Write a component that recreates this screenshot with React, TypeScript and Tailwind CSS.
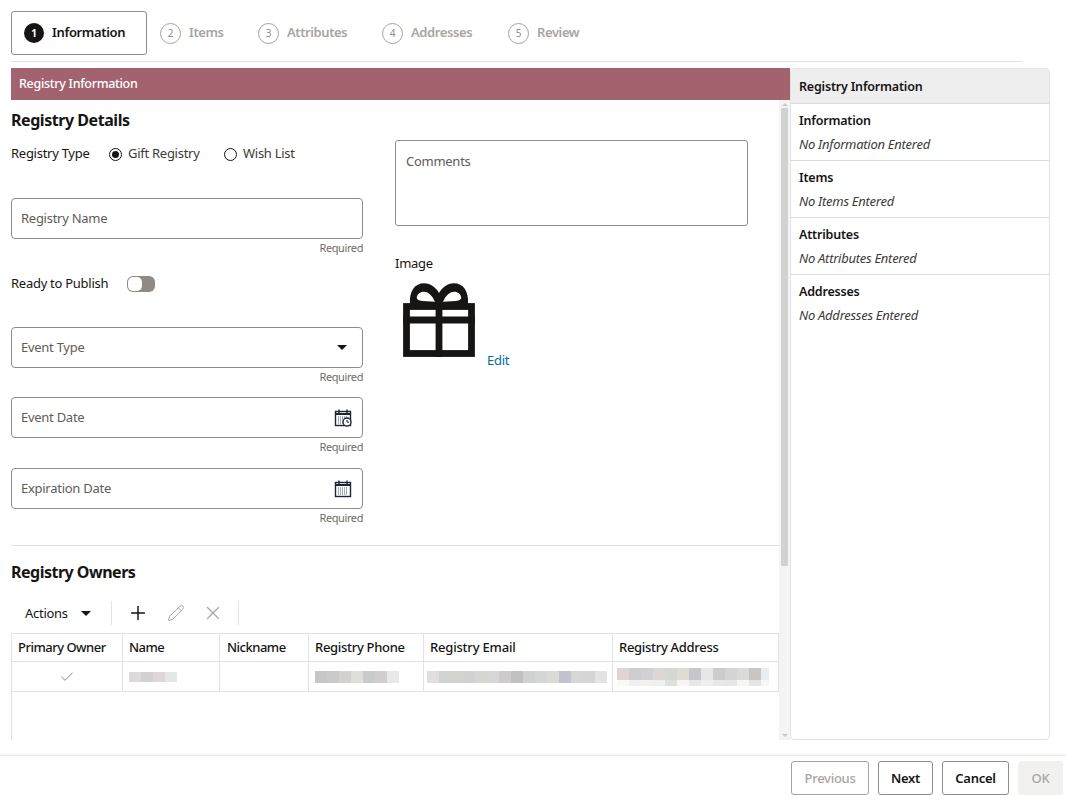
import { Check, Pencil, Plus, X } from "lucide-react";

const FONT = "font-['Noto_Sans','Open_Sans',sans-serif]";

const steps = [
  { n: 2, label: "Items", cls: "ml-[13px] mr-[36px]", w: "w-[33px]" },
  { n: 3, label: "Attributes", cls: "mr-[36px]", w: "w-[59px]" },
  { n: 4, label: "Addresses", cls: "mr-[35px]", w: "w-[62px]" },
  { n: 5, label: "Review", cls: "", w: "w-[44px]" },
];

const summary = [
  { title: "Information", text: "No Information Entered" },
  { title: "Items", text: "No Items Entered" },
  { title: "Attributes", text: "No Attributes Entered" },
  { title: "Addresses", text: "No Addresses Entered" },
];

const Caret = () => (
  <svg width="10" height="5" viewBox="0 0 10 5" className="block">
    <path d="M0 0h10L5 5z" fill="#161513" />
  </svg>
);

const CalendarIcon = ({ clock }: { clock?: boolean }) => (
  <svg width="18" height="18" viewBox="0 0 18 18" fill="none">
    <rect x="1.5" y="2.5" width="15" height="14" fill="#fff" stroke="#1d2433" strokeWidth="1.4" />
    <path d="M1.5 5h15" stroke="#1d2433" strokeWidth="2" />
    <path d="M5 0.5v3.5M13 0.5v3.5" stroke="#1d2433" strokeWidth="1.4" />
    <path d="M4 8h10M4 10h10M4 12h10M4 14h10" stroke="#4a5a78" strokeWidth="1" strokeDasharray="1 1" />
    {clock && (
      <>
        <circle cx="13" cy="13" r="4" fill="#fff" stroke="#1d2433" strokeWidth="1.3" />
        <path d="M13 11v2.2h2" stroke="#1d2433" strokeWidth="1" />
      </>
    )}
  </svg>
);

const GiftIcon = () => (
  <svg width="74" height="75" viewBox="0 0 74 75" fill="none" className="block shrink-0">
    <path
      fillRule="evenodd"
      fill="#161513"
      d="M8 21C7 8 13 .3 22 .3 29 .3 34 5 37 10 40 5 45 .3 52 .3 61 .3 67 8 66 21ZM14.7 15C15 11 18 8.7 22 8.7 26 8.7 30 12 33 18.7L20 18C17 17.5 15 16.5 14.7 15ZM59.3 15C59 11 56 8.7 52 8.7 48 8.7 44 12 41 18.7L54 18C57 17.5 59 16.5 59.3 15Z"
    />
    <rect x="4.5" y="23.5" width="65" height="47" stroke="#161513" strokeWidth="6.8" />
    <path d="M1 37h72M37 20v54" stroke="#161513" strokeWidth="6.8" />
  </svg>
);

// floating style text field, label sits inside the box
const Field = ({ label, children, top }: { label: string; children?: React.ReactNode; top?: string }) => (
  <div className={top}>
    <div className="flex h-[41px] items-center justify-between rounded-[4px] border border-[#8f8c88] pl-[9px] pr-[10px]">
      <span className="text-[13px] text-[#5f5b57]">{label}</span>
      {children}
    </div>
    <div className="mt-[1px] text-right text-[11px] leading-[15px] tracking-[-0.4px] text-[#6f6b67]">Required</div>
  </div>
);

const Mosaic = ({ colors, size = 12 }: { colors: string[]; size?: number }) => (
  <div className="flex">
    {colors.map((c, i) => (
      <div key={i} className="w-[12px] shrink-0" style={{ backgroundColor: c, height: size }} />
    ))}
  </div>
);

const App = () => {
  return (
    <div className={`${FONT} flex h-[795px] w-[1066px] flex-col overflow-hidden bg-white text-[13px] tracking-[-0.27px] text-[#161513]`}>
      {/* train */}
      <div className="ml-[11px] mr-[44px] box-content flex h-[50px] shrink-0 items-start border-b border-[#e4e3e1] pt-[11px]">
        <div className="flex h-[44px] w-[136px] items-center rounded-[3px] border border-[#8f8c88] pl-[12px]">
          <span className="flex h-[20px] w-[20px] items-center justify-center rounded-full bg-[#161513] text-[10px] font-bold text-white">1</span>
          <span className="ml-[8px] text-[13px] font-semibold tracking-[-0.35px]">Information</span>
        </div>
        {steps.map((s) => (
          <div key={s.n} className={`flex h-[44px] items-center ${s.cls}`}>
            <span className="flex h-[21px] w-[21px] items-center justify-center rounded-full border border-[#a5a29e] text-[10px] text-[#8f8c88]">{s.n}</span>
            <span className={`ml-[8px] whitespace-nowrap text-[13px] font-semibold tracking-[-0.4px] text-[#a8a5a1] ${s.w}`}>{s.label}</span>
          </div>
        ))}
      </div>

      {/* main */}
      <div className="ml-[11px] mt-[6px] flex h-[672px] w-[1039px] shrink-0">
        <div className="flex w-[779px] flex-col">
          <div className="flex h-[32px] shrink-0 items-center bg-[#a2636f] pl-[8px] text-[12.5px] font-medium tracking-[-0.3px] text-white">Registry Information</div>
          <div className="flex min-h-0 flex-1">
            <div className="w-[768px] overflow-hidden">
              <h2 className="mt-[8px] text-[16px] font-bold leading-[24px] tracking-[-0.45px]">Registry Details</h2>
              <div className="mt-[8px] flex">
                <div className="w-[352px] pt-[2px]">
                  <div className="flex h-[24px] items-center whitespace-nowrap">
                    <span className="w-[98px]">Registry Type</span>
                    <span className="flex h-[13px] w-[13px] items-center justify-center rounded-full border border-[#161513]">
                      <span className="h-[7px] w-[7px] rounded-full bg-[#161513]" />
                    </span>
                    <span className="ml-[6px] w-[71px] text-[#3c3a38]">Gift Registry</span>
                    <span className="ml-[25px] h-[13px] w-[13px] rounded-full border border-[#161513]" />
                    <span className="ml-[6px] text-[#3c3a38]">Wish List</span>
                  </div>
                  <Field label="Registry Name" top="mt-[32px]" />
                  <div className="mt-[17px] flex h-[24px] items-center">
                    <span className="w-[116px]">Ready to Publish</span>
                    <span className="flex h-[16px] w-[28px] items-center rounded-[6px] bg-[#8f8a84] pl-[1px]">
                      <span className="h-[14px] w-[14px] rounded-[5px] bg-white" />
                    </span>
                  </div>
                  <Field label="Event Type" top="mt-[31px]">
                    <span className="mr-[5px]"><Caret /></span>
                  </Field>
                  <Field label="Event Date" top="mt-[13px]">
                    <CalendarIcon clock />
                  </Field>
                  <Field label="Expiration Date" top="mt-[14px]">
                    <CalendarIcon />
                  </Field>
                </div>
                <div className="ml-[32px] w-[353px]">
                  <div className="h-[86px] rounded-[3px] border border-[#8f8c88] pl-[10px] pt-[11px] text-[#5f5b57]">Comments</div>
                  <div className="mt-[28px] leading-[18px]">Image</div>
                  <div className="mt-[11px] flex items-end pl-[7px]">
                    <GiftIcon />
                    <span className="-mb-[12px] ml-[11px] text-[#006b9f]">Edit</span>
                  </div>
                </div>
              </div>

              <div className="mt-[20px] border-t border-[#e4e3e1]" />
              <h2 className="mt-[14px] text-[16px] font-bold leading-[24px] tracking-[-0.5px]">Registry Owners</h2>

              <div className="ml-[14px] mt-[12px] flex h-[34px] items-center">
                <span className="w-[44px] pt-[1px]">Actions</span>
                <span className="ml-[12px] mr-[20px]"><Caret /></span>
                <span className="h-[24px] w-px bg-[#e4e3e1]" />
                <Plus size={22} strokeWidth={1.6} className="ml-[15px] text-[#161513]" />
                <Pencil size={18} strokeWidth={1.3} className="ml-[18px] text-[#a8a5a1]" />
                <X size={22} strokeWidth={1.3} className="ml-[17px] text-[#a8a5a1]" />
                <span className="ml-[14px] h-[24px] w-px bg-[#e4e3e1]" />
              </div>

              <div className="mt-[3px] h-[107px] border-l border-[#e4e3e1]">
                <div className="grid h-[29px] grid-cols-[111px_97px_89px_115px_189px_166px] border-y border-[#e4e3e1] font-medium tracking-[-0.5px]">
                  <div className="flex items-center border-r border-[#e4e3e1] pl-[6px]">Primary Owner</div>
                  <div className="flex items-center border-r border-[#e4e3e1] pl-[6px]">Name</div>
                  <div className="flex items-center border-r border-[#e4e3e1] pl-[7px]">Nickname</div>
                  <div className="flex items-center border-r border-[#e4e3e1] pl-[6px] tracking-[-0.3px]">Registry Phone</div>
                  <div className="flex items-center border-r border-[#e4e3e1] pl-[6px] tracking-[-0.2px]">Registry Email</div>
                  <div className="flex items-center border-r border-[#e4e3e1] pl-[6px] tracking-[-0.3px]">Registry Address</div>
                </div>
                <div className="grid h-[30px] grid-cols-[111px_97px_89px_115px_189px_166px] border-b border-[#e4e3e1]">
                  <div className="flex items-center justify-center border-r border-[#e4e3e1]">
                    <Check size={16} strokeWidth={1.2} className="text-[#6f6b67]" />
                  </div>
                  <div className="flex items-center border-r border-[#e4e3e1] pl-[6px]">
                    <Mosaic colors={["#dcdada", "#d2d0d0", "#dcd6d8", "#e4e6e7"]} size={10} />
                  </div>
                  <div className="border-r border-[#e4e3e1]" />
                  <div className="flex items-center border-r border-[#e4e3e1] pl-[6px]">
                    <Mosaic colors={["#c8c6c5", "#cbcaca", "#d3d2d1", "#dfdedb", "#c9cacb", "#d1cfce", "#e8e8e8"]} />
                  </div>
                  <div className="flex items-center border-r border-[#e4e3e1] pl-[3px]">
                    <Mosaic colors={["#e0dfde", "#d1d3d3", "#d2d3ce", "#d3d0d4", "#d5d7d1", "#d9d6d8", "#cdcbcc", "#c2bfc1", "#d0d2d0", "#d4d6d5", "#dcdad4", "#c2c3cc", "#d7d7d8", "#d6d4d6", "#e2e4e1"]} />
                  </div>
                  <div className="flex flex-col justify-center border-r border-[#e4e3e1] pl-[4px]">
                    <div className="w-[152px] overflow-hidden">
                      <Mosaic colors={["#ded5d4", "#cecdd0", "#d1d0d3", "#dcd6d6", "#d5d7d2", "#dedcd3", "#c6c6cb", "#e7e7e9", "#cccccc", "#d4d4d5", "#d9dcda", "#c9c5c3", "#e9edf0"]} />
                      <Mosaic size={6} colors={["#f8f8f7", "#f0f0f0", "#f2f1f0", "#eff0f0", "#dfdfdd", "#f6f6f6", "#e7e7e7", "#efefef", "#e8e8e8", "#e6e6e6", "#f6f6f4", "#e4e4e3", "#f7f7f7"]} />
                    </div>
                  </div>
                </div>
              </div>
            </div>

            {/* scrollbar */}
            <div className="flex w-[11px] flex-col items-center bg-[#f4f4f4]">
              <span className="mt-[3px] h-0 w-0 border-x-[3px] border-b-[3px] border-x-transparent border-b-[#c8c8c8]" />
              <span className="mt-[2px] h-[458px] w-[7px] bg-[#d2d2d0]" />
              <span className="mb-[3px] mt-auto h-0 w-0 border-x-[3px] border-t-[3px] border-x-transparent border-t-[#c8c8c8]" />
            </div>
          </div>
        </div>

        {/* summary panel */}
        <div className="w-[260px] overflow-hidden rounded-[4px] border border-[#e4e3e1]">
          <div className="flex h-[35px] items-center border-b border-[#d9dde0] bg-[#eeeeee] pl-[8px] pt-[2px] text-[12.5px] font-semibold tracking-[-0.2px]">Registry Information</div>
          {summary.map((s) => (
            <div key={s.title} className="h-[57px] border-b border-[#d9dde0] pl-[8px] pt-[8px] last:border-b-0">
              <div className="text-[12.5px] font-semibold leading-[18px] tracking-[-0.2px]">{s.title}</div>
              <div className="mt-[5px] italic leading-[18px] text-[#3c3a38]">{s.text}</div>
            </div>
          ))}
        </div>
      </div>

      {/* footer */}
      <div className="mt-[15px] flex h-[40px] shrink-0 items-start justify-end border-t border-[#e9e9e8] pr-[3px] pt-[5px] shadow-[0_-1px_3px_rgba(0,0,0,0.06)]">
        <button className="h-[34px] w-[78px] rounded-[3px] border border-[#a5a29e] pt-[1px] font-medium text-[#a8a5a1]">Previous</button>
        <button className="ml-[9px] h-[34px] w-[55px] rounded-[3px] border border-[#8f8c88] pt-[1px] font-semibold">Next</button>
        <button className="ml-[9px] h-[34px] w-[67px] rounded-[3px] border border-[#8f8c88] pt-[1px] font-semibold">Cancel</button>
        <button className="ml-[9px] h-[34px] w-[45px] rounded-[3px] bg-[#f1f1f0] pt-[1px] font-medium text-[#a8a5a1]">OK</button>
      </div>
    </div>
  );
};

export default App;
